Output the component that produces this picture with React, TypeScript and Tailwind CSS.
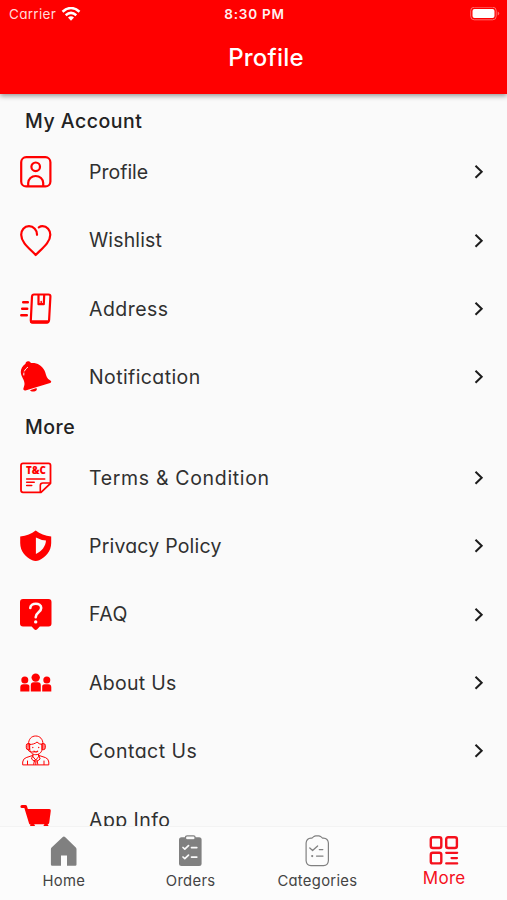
import { FC, ReactNode } from "react";
import clsx from "clsx";

interface IconProps {
  children: ReactNode;
}

const Icon: FC<IconProps> = ({ children }) => (
  <svg viewBox="0 0 32 32" className="size-8 shrink-0" fill="none" stroke="currentColor" strokeWidth="2.2" strokeLinecap="round" strokeLinejoin="round">
    {children}
  </svg>
);

const ProfileIcon = () => (
  <Icon>
    <rect x="1.2" y="1.2" width="29.2" height="29.2" rx="5" />
    <circle cx="15.7" cy="10.8" r="4.3" />
    <path d="M8.2 30v-3a7.5 7 0 0 1 15 0v3" />
  </Icon>
);

const HeartIcon = () => (
  <Icon>
    <path d="M17 9.800C17.200 5 13.500 1.200 9 1.200C4.300 1.200 1.200 5 1.200 9.700C1.200 17.500 9.500 23.500 15.700 30C22 23.500 30.300 17.500 30.300 9.700C30.300 5 27 1.200 22.500 1.200C21 1.200 19.800 1.700 18.800 2.400" />
  </Icon>
);

const AddressIcon = () => (
  <Icon>
    <path d="M14 1.500h14.500q2 0 1.900 2l-1.300 23.500q-.2 2.600-2.600 2.600H12.700q-2 0-1.900-2.200L12 3.500q.2-2 2-2Z" />
    <path d="M11.500 28.800h16" strokeWidth="3" />
    <path d="M18.500 2v9.200h5.300L24.200 2" strokeLinecap="butt" />
    <path d="M21.200 8.500v2.500" strokeWidth="1.500" />
    <path d="M3.200 9.200h4.600M2.200 15.700h5M1.300 22.300h5.500" strokeWidth="2.500" />
  </Icon>
);

const BellIcon = () => (
  <Icon>
    <g fill="currentColor" stroke="none">
      <path d="M5.500 2.700C5.500.8 7.500-.3 9.300.6c1 .4 1.300 1.200 1.700 1.400 6-.5 10.500 2 13.500 7.500 1.200 2.500 1.700 6.500 3.700 8.500l2.500 1.700c1 .9.400 1.900-.6 2.300L5.500 29.400c-1.400.4-2.500-.5-2.100-1.900l1-3.500c.5-3-1-5.500-2.700-9C-.3 10.500 1 6 5.500 2.700Z" />
      <path d="M10 29.300l6.500-2.300c1 1.600-.2 3.100-2.200 3.500-1.900.3-3.700 0-4.300-1.200Z" />
    </g>
    <path d="M7.600 6.300Q3.500 9 3.800 14" stroke="#fafafa" strokeWidth="1" strokeDasharray="5 2" />
  </Icon>
);

const TermsIcon = () => (
  <Icon>
    <path d="M3 1.300h25.500q2 0 2 2v18L21 30.300H3q-2 0-2-2v-25q0-2 2-2Z" strokeWidth="1.800" />
    <path d="M20.300 30v-6.500q0-2.500 2.500-2.500h7.400M6.700 17h18M6.700 20.200h7.500M6.700 23.500h5" strokeWidth="1.600" />
    <text x="15.900" y="12.300" textAnchor="middle" textLength="20" lengthAdjust="spacingAndGlyphs" fill="currentColor" stroke="none" className="font-[Open_Sans,sans-serif] text-[10px] font-extrabold">
      T&amp;C
    </text>
  </Icon>
);

const ShieldIcon = () => (
  <Icon>
    <path d="M15.700.4C20 4 25 5.700 31.200 6.500V13c0 8.500-6 14.500-12 17.300q-3.500 1.400-7 0C6 27.500.2 21.500.2 13V6.500C6.500 5.700 11.500 4 15.700.4Z" fill="currentColor" stroke="none" />
    <path d="M15.900 7.500Q20.500 10 26 10.500C25.500 16.500 22 21 15.900 24Z" fill="#fafafa" stroke="none" />
  </Icon>
);

const FaqIcon = () => (
  <Icon>
    <path d="M3 .1h25.500q3 0 3 3v21.500q0 3-3 3h-8.700l-2.600 2.700q-1.500 1.300-3 0l-2.600-2.700H3q-3 0-3-3V3.100q0-3 3-3Z" fill="currentColor" stroke="none" />
    <path d="M10.300 9C10.500 3.300 21.200 3.300 21.200 9c0 4.500-5.500 4-5.500 9.300" stroke="#fafafa" strokeWidth="2.600" />
    <circle cx="15.700" cy="22.900" r="1.700" fill="#fafafa" stroke="none" />
  </Icon>
);

const PeopleIcon = () => (
  <Icon>
    <g fill="currentColor" stroke="none">
      <circle cx="15.700" cy="10.600" r="4.200" />
      <circle cx="4.800" cy="13" r="3.500" />
      <circle cx="26.800" cy="13" r="3.500" />
      <path d="M10.800 24.600v-6.300q0-3 3-3h4q3 0 3 3v6.300ZM.3 24.600v-4.400q0-2.900 2.900-2.900H7q2 0 2.400 1.500v5.800ZM22.200 24.600v-5.800q.4-1.500 2.400-1.500h3.800q2.900 0 2.900 2.900v4.400Z" />
    </g>
  </Icon>
);

const SupportIcon = () => (
  <Icon>
    <g strokeWidth="1">
      <path d="M8.500 9C8.500 4 11.500 1 15.700 1s7.300 3 7.300 8" />
      <path d="M9.300 8.500h-1q-2 0-2 2v2.200q0 2 2 2h1ZM22.300 8.500h1q2 0 2 2v2.200q0 2-2 2h-1Z" fill="currentColor" fillOpacity=".5" />
      <path d="M9.500 9.500c3 0 5.700-.8 7.500-2.500q2 2.300 5.200 2.500V13c0 4-2.700 6.700-6.400 6.700S9.500 17 9.500 13ZM8.200 14.800c.4 2 2 2.200 5.300 2.200" />
      <path d="M13 19.300v2.500l2.800 3.200 2.700-3.200v-2.500M12.500 20.500l-6.300 2.100Q3 23.700 2.700 27v2.900h26.100V27q-.3-3.300-3.300-4.400l-6.400-2.100M12.500 21l-1 3 3.200 2.500M19.100 21l1 3-3.200 2.500M14.500 25.300l-.8 4M17 25.300l.8 4M7.500 26v3.500M24 26v3.500M15.800 25v4.500" />
      <path d="M14 16.200q1.700 1.500 3.600 0M12.800 12.300v.3M18.700 12.300v.3" strokeWidth="1.300" />
    </g>
  </Icon>
);

const CartIcon = () => (
  <Icon>
    <path d="M1.900 2.500h3.600L10.500 19" strokeWidth="3" />
    <path d="M6 5h23.300q1.700 0 1.500 1.700l-1.600 12q-.3 1.500-2 1.500H10Z" fill="currentColor" stroke="none" />
    <circle cx="12.500" cy="22.200" r="2.500" fill="currentColor" stroke="none" />
    <circle cx="26" cy="22.200" r="2.500" fill="currentColor" stroke="none" />
  </Icon>
);

const HomeIcon = () => (
  <Icon>
    <path d="M15.500 2.200q1.400-1.200 2.800 0l10.500 10.200q.7.800.7 1.800v15.300q0 1.200-1.200 1.200h-8.300V20.500H14v10.200H5.100q-1.200 0-1.200-1.200V14.200q0-1 .7-1.800Z" fill="currentColor" stroke="none" />
  </Icon>
);

const OrdersIcon = () => (
  <Icon>
    <rect x="5" y="2.300" width="22.600" height="28.600" rx="2.500" fill="currentColor" stroke="none" />
    <rect x="11.500" y=".8" width="9.600" height="4" rx="1.600" fill="#fafafa" strokeWidth="1.300" />
    <path d="m9 12.500 1.800 1.700 3.700-3.500M17.500 12.600h5.300M9 22l1.800 1.700 3.700-3.500M17.500 22.100h5.300" stroke="#fafafa" strokeWidth="1.700" />
  </Icon>
);

const CategoriesIcon = () => (
  <Icon>
    <g strokeWidth="1.200">
      <path d="M11 3.100 13 1.400q.8-.6 1.700-.6h3.100q.9 0 1.700.6l2 1.700h1q4.500.3 4.900 4.900v17.700q-.4 4.700-4.900 5H10q-4.500-.3-4.900-5V8Q5.500 3.400 10 3.100Z" />
      <path d="m8.800 13 2.800 2.500 5-4.500M18.300 14.600h3.500M15.500 21.100h6.500" strokeWidth="1.300" />
      <circle cx="11.200" cy="21.100" r="1.100" fill="currentColor" stroke="none" />
    </g>
  </Icon>
);

const MoreIcon = () => (
  <Icon>
    <g strokeWidth="2.400">
      <rect x="2.800" y="2.300" width="10.500" height="10.700" rx="2" />
      <rect x="18.200" y="2.300" width="10.700" height="10.700" rx="2" />
      <rect x="2.800" y="17.700" width="10.500" height="10.700" rx="2" />
      <path d="M18.200 17.800h11M23.500 23.100h5.500M18.200 28.400h11" strokeWidth="2.200" />
    </g>
  </Icon>
);

interface MenuItem {
  label: string;
  icon: ReactNode;
  tracking: string;
  hideArrow?: boolean;
}

const account: MenuItem[] = [
  { label: "Profile", icon: <ProfileIcon />, tracking: "tracking-normal" },
  { label: "Wishlist", icon: <HeartIcon />, tracking: "tracking-[0.15px]" },
  { label: "Address", icon: <AddressIcon />, tracking: "tracking-[0.45px]" },
  { label: "Notification", icon: <BellIcon />, tracking: "tracking-[0.4px]" },
];

const more: MenuItem[] = [
  { label: "Terms & Condition", icon: <TermsIcon />, tracking: "tracking-[0.67px]" },
  { label: "Privacy Policy", icon: <ShieldIcon />, tracking: "tracking-[0.2px]" },
  { label: "FAQ", icon: <FaqIcon />, tracking: "tracking-[0.5px]" },
  { label: "About Us", icon: <PeopleIcon />, tracking: "tracking-[0.28px]" },
  { label: "Contact Us", icon: <SupportIcon />, tracking: "tracking-[0.5px]" },
  { label: "App Info", icon: <CartIcon />, tracking: "tracking-[0.43px]", hideArrow: true },
];

const tabs = [
  { label: "Home", icon: <HomeIcon />, active: false },
  { label: "Orders", icon: <OrdersIcon />, active: false },
  { label: "Categories", icon: <CategoriesIcon />, active: false },
  { label: "More", icon: <MoreIcon />, active: true },
];

const Section: FC<{ title: string; items: MenuItem[] }> = ({ title, items }) => (
  <section>
    <h2 className="flex h-8 items-center pl-[25px] text-[19.500px] font-medium tracking-[0.5px] text-[#222]">{title}</h2>
    {items.map((item) => (
      <button key={item.label} className="flex h-[68.400px] w-full items-center pl-5 pr-[22px] text-left text-[#ff0000]">
        {item.icon}
        <span className={clsx("ml-[37px] flex-1 pt-px text-[19.500px] whitespace-nowrap text-[#303030]", item.tracking)}>{item.label}</span>
        {!item.hideArrow && (
          <svg viewBox="0 0 12 16" className="h-4 w-3 text-[#1c1c1c]" fill="none" stroke="currentColor" strokeWidth="2">
            <path d="m2.500 1.700 6.200 6-6.200 6" />
          </svg>
        )}
      </button>
    ))}
  </section>
);

const App: FC = () => {
  return (
    <div className="flex h-[900px] w-[507px] flex-col overflow-hidden bg-[#fafafa] font-[Inter,sans-serif] [font-feature-settings:'cv11']">
      <header className="z-10 h-[94px] shrink-0 bg-[#ff0000] text-white shadow-[0_2px_5px_rgba(0,0,0,0.4)]">
        <div className="grid h-7 grid-cols-3 items-center pl-[9px] pr-[7px] text-[13.500px]">
          <div className="flex items-center gap-1.5 text-[#ffd9d9]">
            <span className="tracking-[0.3px]">Carrier</span>
            <svg viewBox="0 0 20 15" className="-ml-px h-[15px] w-5 text-white" fill="none" stroke="currentColor" strokeWidth="2.500">
              <path d="M1.500 4.800q8.500-7.500 17 0M4.700 8.200q5.300-4.700 10.600 0" />
              <path d="M7 10.500q3-2.300 6 0l-3 3.200Z" fill="currentColor" stroke="none" />
            </svg>
          </div>
          <span className="text-center font-semibold tracking-[0.75px] text-[#fff0f0]">8:30 PM</span>
          <svg viewBox="0 0 30 14" className="h-3.500 w-[30px] justify-self-end" fill="none">
            <rect x=".7" y=".2" width="25.500" height="12.600" rx="3.500" stroke="#ff6b6b" />
            <rect x="2.500" y="2" width="22" height="9" rx="2" fill="#fff" />
            <path d="M27.700 4.500v4q1.500-.5 1.500-2t-1.500-2Z" fill="#ff6b6b" />
          </svg>
        </div>
        <h1 className="mt-3 pl-[25px] text-center text-2xl leading-9 font-medium tracking-[0.2px]">Profile</h1>
      </header>
      <main className="min-h-0 flex-1 overflow-hidden pt-3">
        <Section title="My Account" items={account} />
        <Section title="More" items={more} />
      </main>
      <nav className="grid h-[74px] shrink-0 grid-cols-4 border-t border-[#f3f3f3] bg-[#fcfcfc] pt-2">
        {tabs.map((tab) => (
          <button key={tab.label} className={clsx("flex flex-col items-center", tab.active ? "text-[#f5101c]" : "text-[#808080]")}>
            {tab.icon}
            <span className={clsx("pl-px tracking-[0.3px]", tab.active ? "text-[17px] leading-[22px]" : "mt-[3px] text-[14.800px] leading-[22px] text-[#444]")}>
              {tab.label}
            </span>
          </button>
        ))}
      </nav>
    </div>
  );
};

export default App;
